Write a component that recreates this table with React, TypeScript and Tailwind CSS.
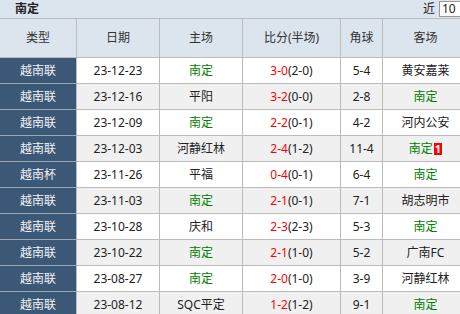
import React from 'react';

interface Match {
  type: string;
  date: string;
  home: string;
  score: string;
  half: string;
  corner: string;
  away: string;
  badge?: string;
}

const TEAM = '南定';

const matches: Match[] = [
  { type: '越南联', date: '23-12-23', home: '南定', score: '3-0', half: '(2-0)', corner: '5-4', away: '黄安嘉莱' },
  { type: '越南联', date: '23-12-16', home: '平阳', score: '3-2', half: '(0-0)', corner: '2-8', away: '南定' },
  { type: '越南联', date: '23-12-09', home: '南定', score: '2-2', half: '(0-1)', corner: '4-2', away: '河内公安' },
  { type: '越南联', date: '23-12-03', home: '河静红林', score: '2-4', half: '(1-2)', corner: '11-4', away: '南定', badge: '1' },
  { type: '越南杯', date: '23-11-26', home: '平福', score: '0-4', half: '(0-1)', corner: '6-4', away: '南定' },
  { type: '越南联', date: '23-11-03', home: '南定', score: '2-1', half: '(0-1)', corner: '7-1', away: '胡志明市' },
  { type: '越南联', date: '23-10-28', home: '庆和', score: '2-3', half: '(2-3)', corner: '5-3', away: '南定' },
  { type: '越南联', date: '23-10-22', home: '南定', score: '2-1', half: '(1-0)', corner: '5-2', away: '广南FC' },
  { type: '越南联', date: '23-08-27', home: '南定', score: '2-0', half: '(1-0)', corner: '3-9', away: '河静红林' },
  { type: '越南联', date: '23-08-12', home: 'SQC平定', score: '1-2', half: '(1-2)', corner: '9-1', away: '南定' },
];

const cols = 'grid grid-cols-[77px_83px_83px_98px_42px_86px]';
const cell = 'flex items-center justify-center border-r border-b border-[#bbb]';

const Team: React.FC<{ name: string; badge?: string }> = ({ name, badge }) => (
  <span className={name === TEAM ? 'text-[#008000]' : 'text-[#222]'}>
    {name}
    {badge && (
      <span className="ml-px inline-block bg-[#f00] px-[1px] text-[11px] font-bold leading-[12px] text-white">{badge}</span>
    )}
  </span>
);

export default function App() {
  return (
    <div
      className="h-[314px] w-[460px] overflow-hidden bg-white text-[12px] text-[#222]"
      style={{ fontFamily: '"Noto Sans", "Noto Sans CJK SC", sans-serif' }}
    >
      <div className="w-[469px]">
        <div className="flex h-[19px] items-center justify-between border-b border-[#bbb] bg-[#dce4ee]">
          <span className="pl-[15px] font-bold leading-none">南定</span>
          <div className="flex items-center gap-[4px] pr-[0px]">
            <span className="leading-none">近</span>
            <div className="flex h-[16px] w-[30px] items-center border border-[#999] bg-white pl-[2px] leading-none">10</div>
          </div>
        </div>

        <div className={`${cols} h-[39px] bg-[#dce4ee] text-[#333]`}>
          <div className={cell}>类型</div>
          <div className={cell}>日期</div>
          <div className={cell}>主场</div>
          <div className={cell}>比分(半场)</div>
          <div className={cell}>角球</div>
          <div className={cell}>客场</div>
        </div>

        {matches.map((m, i) => (
          <div key={m.date} className={`${cols} h-[26px] ${i % 2 === 0 ? 'bg-white' : 'bg-[#f0f0f0]'}`}>
            <div className={`${cell} border-b-[#9aa6b3] bg-[#3b5877] text-[#f2f2f2]`}>{m.type}</div>
            <div className={cell}>{m.date}</div>
            <div className={cell}>
              <Team name={m.home} />
            </div>
            <div className={cell}>
              <span className="text-[#f00]">{m.score}</span>
              <span>{m.half}</span>
            </div>
            <div className={cell}>{m.corner}</div>
            <div className={cell}>
              <Team name={m.away} badge={m.badge} />
            </div>
          </div>
        ))}
      </div>
    </div>
  );
}
